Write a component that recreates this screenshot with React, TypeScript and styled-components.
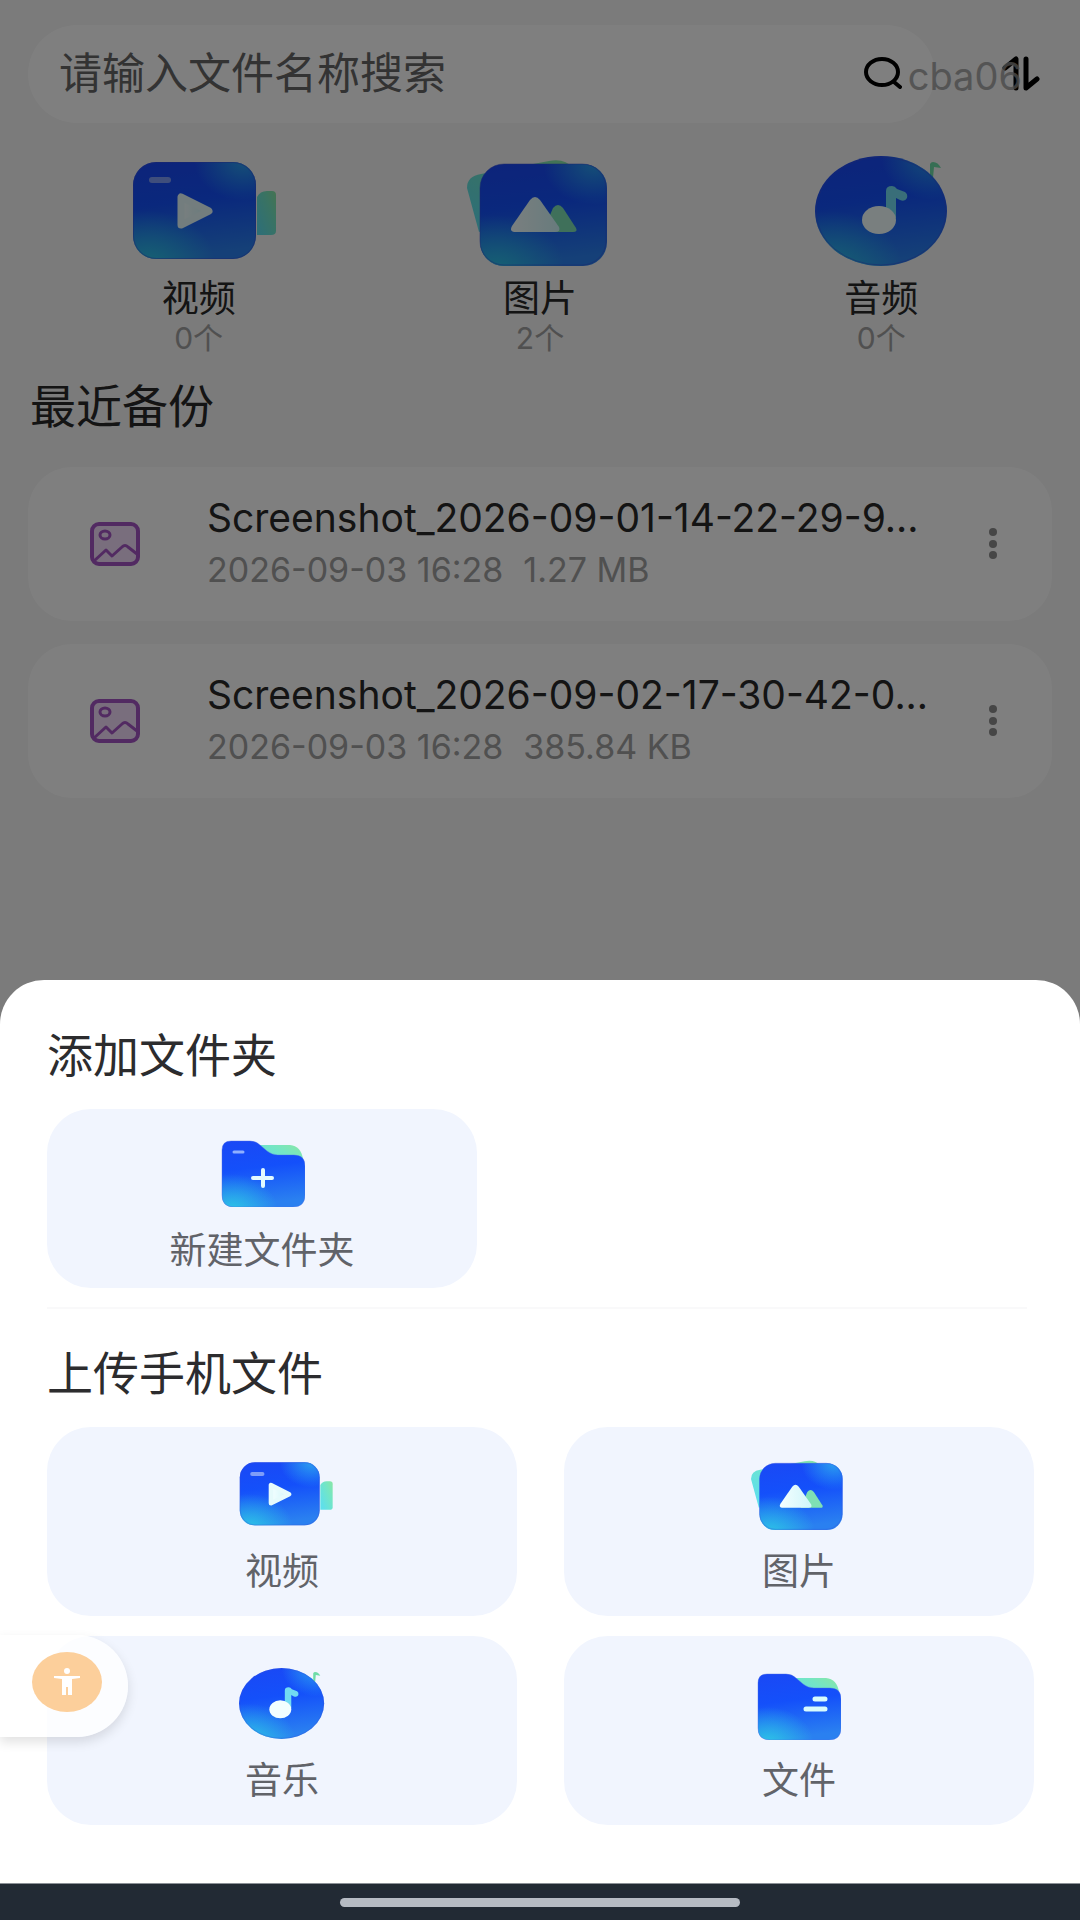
import React, { useId } from "react";
import styled, { createGlobalStyle } from "styled-components";

const GlobalStyle = createGlobalStyle`
  *, *::before, *::after { box-sizing: border-box; }
  body {
    margin: 0;
    background: #f6f6f6;
    font-family: Inter, "Noto Sans CJK SC", sans-serif;
    color: #282828;
  }
  button, input { font: inherit; color: inherit; }
  h2, p, ul { margin: 0; padding: 0; }
`;

const Page = styled.main`
  min-height: 100vh;
  padding: 25px 28px 0;
  background: #f6f6f6;
`;

const Header = styled.header`
  position: relative;
  display: flex;
  align-items: center;
  gap: 67px;
  padding-right: 12px;
`;

const SearchBar = styled.label`
  flex: 1;
  min-width: 0;
  height: 98px;
  display: flex;
  align-items: center;
  padding: 0 33px 2px 31px;
  border-radius: 49px;
  background: #ffffff;
`;

const SearchInput = styled.input`
  flex: 1;
  min-width: 0;
  padding: 0;
  border: 0;
  outline: 0;
  background: transparent;
  font-size: 43px;
  line-height: 60px;
  &::placeholder {
    color: #666666;
    opacity: 1;
  }
`;

const IconButton = styled.button`
  display: flex;
  align-items: center;
  justify-content: center;
  padding: 0;
  border: 0;
  background: transparent;
  cursor: pointer;
`;

const Watermark = styled.span`
  position: absolute;
  right: 30px;
  top: 29px;
  font-size: 38px;
  line-height: 44px;
  color: #969696;
  opacity: 0.8;
  pointer-events: none;
`;

const Categories = styled.nav`
  display: grid;
  grid-template-columns: repeat(3, 1fr);
  padding-top: 32px;
`;

const Category = styled.button`
  display: flex;
  flex-direction: column;
  align-items: center;
  padding: 0;
  border: 0;
  background: transparent;
  cursor: pointer;
`;

const CategoryIcon = styled.span`
  height: 112px;
  display: flex;
  align-items: center;
  margin-bottom: 10px;
`;

const CategoryName = styled.span`
  font-size: 37px;
  line-height: 44px;
`;

const CategoryCount = styled.span`
  font-size: 30px;
  line-height: 35px;
  color: #a0a0a0;
`;

const Heading = styled.h2`
  font-size: 46px;
  line-height: 56px;
  font-weight: 400;
`;

const RecentHeading = styled(Heading)`
  padding: 22px 0 33px 2px;
`;

const FileList = styled.ul`
  display: flex;
  flex-direction: column;
  gap: 23px;
  list-style: none;
`;

const FileRow = styled.li`
  display: flex;
  align-items: center;
  height: 154px;
  padding: 0 44px 0 62px;
  border-radius: 44px;
  background: #ffffff;
`;

const FileText = styled.div`
  flex: 1;
  min-width: 0;
  padding: 0 20px 0 67px;
`;

const FileName = styled.p`
  overflow: hidden;
  white-space: nowrap;
  text-overflow: ellipsis;
  font-size: 39px;
  line-height: 52px;
`;

const FileMeta = styled.p`
  display: flex;
  gap: 20px;
  white-space: nowrap;
  font-size: 34px;
  line-height: 52px;
  color: #a0a0a0;
`;

const Scrim = styled.div`
  position: fixed;
  inset: 0;
  display: flex;
  flex-direction: column;
  justify-content: flex-end;
  background: rgba(0, 0, 0, 0.5);
`;

const Sheet = styled.section`
  position: relative;
  padding: 47px 46px 58px 47px;
  border-radius: 44px 44px 0 0;
  background: #ffffff;
  color: #2c2c2e;
`;

const SheetHeading = styled(Heading)`
  margin-bottom: 26px;
`;

const Tile = styled.button<{ $compact?: boolean }>`
  width: ${(p) => (p.$compact ? "430px" : "100%")};
  display: flex;
  flex-direction: column;
  align-items: center;
  gap: 20px;
  padding: ${(p) => (p.$compact ? "28px 0 15px" : "31px 0 22px")};
  border: 0;
  border-radius: 44px;
  background: #f1f5fe;
  color: #616369;
  font-size: 37px;
  line-height: 44px;
  cursor: pointer;
`;

const TileIcon = styled.span`
  height: 72px;
  display: flex;
  align-items: center;
`;

const Divider = styled.hr`
  height: 2px;
  margin: 19px 7px 36px 0;
  border: 0;
  background: #f9f9fa;
`;

const TileGrid = styled.div`
  display: grid;
  grid-template-columns: 1fr 1fr;
  gap: 20px 47px;
`;

const FloatingButton = styled.button`
  position: absolute;
  left: 0;
  bottom: 146px;
  width: 128px;
  height: 102px;
  display: flex;
  align-items: center;
  justify-content: center;
  padding: 0 0 8px 5px;
  border: 0;
  border-radius: 0 51px 51px 0;
  background: rgba(255, 255, 255, 0.8);
  box-shadow: 0 5px 12px rgba(0, 0, 0, 0.12);
  cursor: pointer;
`;

const SystemBar = styled.footer`
  height: 37px;
  display: flex;
  align-items: center;
  justify-content: center;
  border-top: 1px solid #8b9096;
  background: #222a34;
`;

const HomePill = styled.span`
  width: 37%;
  height: 9px;
  border-radius: 5px;
  background: #b6bbc3;
`;

type IconProps = { height: number };

function Glow({ id }: { id: string }) {
  return (
    <defs>
      <linearGradient id={id + "base"} x1="0" y1="0" x2="0.15" y2="1">
        <stop offset="0" stopColor="#1a48f5" />
        <stop offset="0.45" stopColor="#1450fa" />
        <stop offset="1" stopColor="#2a80f0" />
      </linearGradient>
      <radialGradient id={id + "low"} cx="0.12" cy="1.05" r="0.55">
        <stop offset="0" stopColor="#2cc8e6" stopOpacity="0.95" />
        <stop offset="1" stopColor="#2cc8e6" stopOpacity="0" />
      </radialGradient>
      <radialGradient id={id + "high"} cx="0.9" cy="0" r="0.4">
        <stop offset="0" stopColor="#2fb4ee" stopOpacity="0.8" />
        <stop offset="1" stopColor="#2fb4ee" stopOpacity="0" />
      </radialGradient>
      <linearGradient id={id + "mint"} x1="1" y1="0" x2="0.1" y2="0.8">
        <stop offset="0" stopColor="#8be6a4" />
        <stop offset="0.4" stopColor="#74e6c4" />
        <stop offset="1" stopColor="#5fdfea" />
      </linearGradient>
      <linearGradient id={id + "pale"} x1="0" y1="0" x2="1" y2="0">
        <stop offset="0" stopColor="#f4ffff" />
        <stop offset="1" stopColor="#d0f6fa" />
      </linearGradient>
    </defs>
  );
}

function VideoIcon({ height }: IconProps) {
  const id = useId();
  const layers = ["base", "low", "high"];
  return (
    <svg height={height} viewBox="-12 1 155 97" overflow="visible" aria-hidden="true">
      <Glow id={id} />
      <path d="M124 35q3-6 10-6h5q4 0 4 4v36q0 4-5 4h-14z" fill={`url(#${id}mint)`} />
      {layers.map((l) => (
        <rect key={l} width="123" height="97" rx="23" fill={`url(#${id}${l})`} />
      ))}
      <rect x="0.5" y="0.5" width="122" height="96" rx="23" fill="none" stroke="#3a50d8" strokeOpacity="0.5" />
      <rect x="16" y="15" width="22" height="6" rx="3" fill="#7f9df8" />
      <path d="M48 36v28l28-14z" transform="translate(0 -1)" fill={`url(#${id}pale)`} stroke="#e6fbfc" strokeWidth="7" strokeLinejoin="round" />
    </svg>
  );
}

function PictureIcon({ height }: IconProps) {
  const id = useId();
  return (
    <svg height={height} viewBox="0 -4 146 110" aria-hidden="true">
      <Glow id={id} />
      <path d="M12 72L0 28q0-12 14-14L82 1q16-3 24 7v30z" fill={`url(#${id}mint)`} />
      {["base", "low", "high"].map((l) => (
        <rect key={l} x="13" y="4" width="127" height="102" rx="24" fill={`url(#${id}${l})`} />
      ))}
      <rect x="13" y="4" width="126" height="101" rx="24" fill="none" stroke="#3a50d8" strokeOpacity="0.5" />
      <path d="M86 48q5-6 10 0l13 20q2 4-3 4H76z" fill="#7fe0b4" />
      <path d="M63 40q5-6 10 0l19 27q2 5-4 5H47q-5-1-2-6z" fill={`url(#${id}pale)`} />
    </svg>
  );
}

function AudioIcon({ height }: IconProps) {
  const id = useId();
  return (
    <svg height={height} viewBox="0 0 132 110" aria-hidden="true">
      <Glow id={id} />
      <path d="M115 20V8q1-2 3-2 5 0 8 6l-7-1-1 11z" fill="#6fdca8" />
      {["base", "low", "high"].map((l) => (
        <ellipse key={l} cx="66" cy="55" rx="66" ry="55" fill={`url(#${id}${l})`} />
      ))}
      <ellipse cx="66" cy="55" rx="65" ry="54" fill="none" stroke="#3a50d8" strokeOpacity="0.5" />
      <path d="M71 60V35q0-5 6-5 3 0 5 3l8 3q3 2 2 6-2 4-7 2l-4-2v20z" fill="#72dcf2" />
      <ellipse cx="64" cy="64" rx="17" ry="14" fill="#f2ffff" />
    </svg>
  );
}

function FolderIcon({ height, mark }: IconProps & { mark: "plus" | "lines" }) {
  const id = useId();
  const body =
    "M9 0H28Q34 0 38 4L45 10Q50 14 56 14H72Q83 14 83 25V54Q83 66 71 66H12Q0 66 0 54V9Q0 0 9 0Z";
  return (
    <svg height={height} viewBox={mark === "plus" ? "-3 -1 86 67" : "-1 -7 84 73"} aria-hidden="true">
      <Glow id={id} />
      <path d="M30 4H68Q79 5 81 18V28H44Z" fill={`url(#${id}mint)`} />
      {["base", "low"].map((l) => (
        <path key={l} d={body} fill={`url(#${id}${l})`} />
      ))}
      <path d={body} fill="none" stroke="#4b6ce6" strokeOpacity="0.4" />
      {mark === "plus" ? (
        <>
          <path d="M12 11H21" stroke="#8fb0ff" strokeWidth="3" strokeLinecap="round" />
          <path d="M31 37H50M41 29V45" stroke="#e2fbff" strokeWidth="4" strokeLinecap="round" />
        </>
      ) : (
        <path d="M57 25H67M48 35H67" stroke="#d8fbfc" strokeWidth="5" strokeLinecap="round" />
      )}
    </svg>
  );
}

function SearchIcon() {
  return (
    <svg width="38" height="32" viewBox="0 0 38 32" fill="none" stroke="#000" strokeWidth="4" strokeLinecap="round" aria-hidden="true">
      <ellipse cx="18" cy="15" rx="16" ry="13" />
      <path d="M30 25l6 5" />
    </svg>
  );
}

function SortIcon() {
  return (
    <svg width="38" height="36" viewBox="0 0 38 36" fill="none" stroke="#000" strokeWidth="5" strokeLinecap="round" strokeLinejoin="round" aria-hidden="true">
      <path d="M3 12L14 3V32M24 3V32L35 23" />
    </svg>
  );
}

function ImageFileIcon() {
  return (
    <svg width="50" height="44" viewBox="0 0 50 44" fill="none" stroke="#a455c4" strokeWidth="4" strokeLinejoin="round" aria-hidden="true">
      <rect x="2" y="2" width="46" height="40" rx="7" fill="#f3dcfa" />
      <ellipse cx="15" cy="13" rx="5" ry="4" strokeWidth="3" />
      <path d="M4 39l12-11 6 6 10-9q3-3 6 0l9 7" strokeWidth="3" />
    </svg>
  );
}

function DotsIcon() {
  return (
    <svg width="30" height="36" viewBox="0 0 30 36" fill="#8c8c8c" aria-hidden="true">
      <circle cx="15" cy="6" r="4" />
      <circle cx="15" cy="18" r="4" />
      <circle cx="15" cy="29" r="4" />
    </svg>
  );
}

function AccessibilityIcon() {
  return (
    <svg width="70" height="60" viewBox="0 0 70 60" aria-hidden="true">
      <ellipse cx="35" cy="30" rx="35" ry="30" fill="#fccf9b" />
      <g fill="#ffffff">
        <ellipse cx="35" cy="19" rx="3" ry="3" />
        <path d="M22 24H48V26L40 27V43H36V35H34V43H30V27L22 26Z" />
      </g>
    </svg>
  );
}

const categories = [
  { name: "视频", count: "0个", icon: <VideoIcon height={97} /> },
  { name: "图片", count: "2个", icon: <PictureIcon height={110} /> },
  { name: "音频", count: "0个", icon: <AudioIcon height={110} /> },
];

const files = [
  { name: "Screenshot_2026-09-01-14-22-29-9...", date: "2026-09-03 16:28", size: "1.27 MB" },
  { name: "Screenshot_2026-09-02-17-30-42-0...", date: "2026-09-03 16:28", size: "385.84 KB" },
];

const uploads = [
  { name: "视频", icon: <VideoIcon height={63} /> },
  { name: "图片", icon: <PictureIcon height={72} /> },
  { name: "音乐", icon: <AudioIcon height={71} /> },
  { name: "文件", icon: <FolderIcon height={73} mark="lines" /> },
];

export default function App() {
  return (
    <>
      <GlobalStyle />
      <Page>
        <Header>
          <SearchBar>
            <SearchInput type="text" aria-label="搜索" placeholder="请输入文件名称搜索" />
            <IconButton type="button" aria-label="搜索">
              <SearchIcon />
            </IconButton>
          </SearchBar>
          <IconButton type="button" aria-label="排序">
            <SortIcon />
          </IconButton>
          <Watermark>cba06</Watermark>
        </Header>
        <Categories>
          {categories.map((c) => (
            <Category key={c.name} type="button">
              <CategoryIcon>{c.icon}</CategoryIcon>
              <CategoryName>{c.name}</CategoryName>
              <CategoryCount>{c.count}</CategoryCount>
            </Category>
          ))}
        </Categories>
        <RecentHeading>最近备份</RecentHeading>
        <FileList>
          {files.map((f) => (
            <FileRow key={f.name}>
              <ImageFileIcon />
              <FileText>
                <FileName>{f.name}</FileName>
                <FileMeta>
                  <span>{f.date}</span>
                  <span>{f.size}</span>
                </FileMeta>
              </FileText>
              <IconButton type="button" aria-label="更多">
                <DotsIcon />
              </IconButton>
            </FileRow>
          ))}
        </FileList>
      </Page>
      <Scrim>
        <Sheet role="dialog" aria-label="添加文件夹">
          <SheetHeading>添加文件夹</SheetHeading>
          <Tile type="button" $compact>
            <TileIcon>
              <FolderIcon height={67} mark="plus" />
            </TileIcon>
            新建文件夹
          </Tile>
          <Divider />
          <SheetHeading>上传手机文件</SheetHeading>
          <TileGrid>
            {uploads.map((u) => (
              <Tile key={u.name} type="button">
                <TileIcon>{u.icon}</TileIcon>
                {u.name}
              </Tile>
            ))}
          </TileGrid>
          <FloatingButton type="button" aria-label="无障碍">
            <AccessibilityIcon />
          </FloatingButton>
        </Sheet>
        <SystemBar>
          <HomePill />
        </SystemBar>
      </Scrim>
    </>
  );
}
